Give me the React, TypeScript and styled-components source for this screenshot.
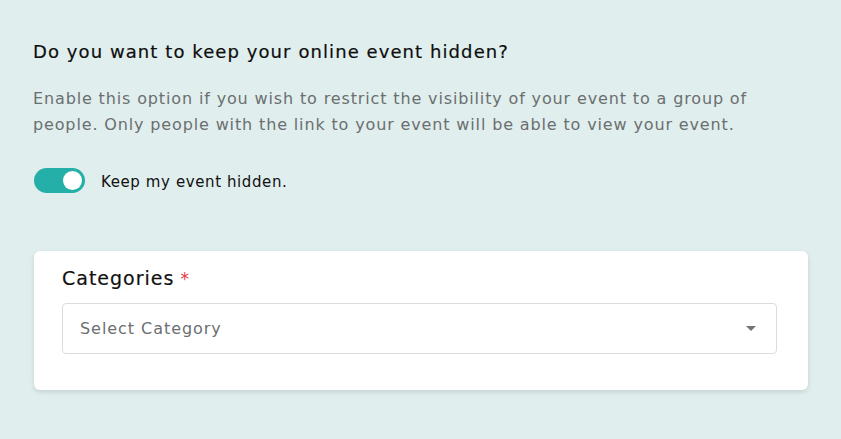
import React, { useState } from "react";
import styled, { createGlobalStyle } from "styled-components";

const Global = createGlobalStyle`
  html, body { margin: 0; padding: 0; background: #e0eeed; }
  body { font-family: "DejaVu Sans", "Noto Sans", sans-serif; }
  * { box-sizing: border-box; }
`;

const Page = styled.div`
  width: 841px;
  height: 439px;
  background: #e0eeed;
  padding: 38px 33px 0 33px;
  display: flex;
  flex-direction: column;
`;

const Heading = styled.h2`
  margin: 0;
  font-size: 18px;
  font-weight: 400;
  letter-spacing: 1.08px;
  line-height: 28px;
  color: #0e0e0e;
  -webkit-text-stroke: 0.2px #0e0e0e;
`;

const Description = styled.p`
  margin: 20px 0 0 0;
  font-size: 16px;
  letter-spacing: 0.86px;
  line-height: 26px;
  color: #6b6f70;
  max-width: 745px;
`;

const ToggleRow = styled.label`
  display: flex;
  align-items: center;
  gap: 16px;
  margin-top: 30px;
  padding-left: 1px;
  cursor: pointer;
`;

const Track = styled.span<{ $on: boolean }>`
  position: relative;
  width: 51px;
  height: 25px;
  border-radius: 13px;
  background: ${(p) => (p.$on ? "#24b0a8" : "#c8cfcf")};
  flex-shrink: 0;
`;

const Knob = styled.span<{ $on: boolean }>`
  position: absolute;
  top: 3px;
  left: ${(p) => (p.$on ? "29px" : "3px")};
  width: 19px;
  height: 19px;
  border-radius: 50%;
  background: #fff;
`;

const ToggleLabel = styled.span`
  font-size: 15px;
  letter-spacing: 0.6px;
  color: #111;
  padding-top: 2px;
`;

const Card = styled.div`
  margin-top: 58px;
  margin-left: 1px;
  width: 774px;
  background: #fff;
  border-radius: 6px;
  box-shadow: 0 2px 5px rgba(0, 0, 0, 0.12);
  padding: 13px 31px 36px 28px;
  display: flex;
  flex-direction: column;
`;

const FieldLabel = styled.div`
  font-size: 19px;
  font-weight: 400;
  letter-spacing: 1px;
  line-height: 28px;
  color: #111;
  -webkit-text-stroke: 0.2px #111;
`;

const Required = styled.span`
  color: #e53945;
  margin-left: 6px;
  font-size: 17px;
  -webkit-text-stroke: 0;
`;

const SelectBox = styled.div`
  margin-top: 10px;
  height: 51px;
  border: 1px solid #dcdcdf;
  border-radius: 4px;
  display: flex;
  align-items: center;
  justify-content: space-between;
  padding: 0 20px 0 17px;
`;

const Placeholder = styled.span`
  font-size: 16px;
  letter-spacing: 0.95px;
  color: #6c6f72;
`;

const Caret = styled.span`
  width: 0;
  height: 0;
  border-left: 5px solid transparent;
  border-right: 5px solid transparent;
  border-top: 5px solid #757575;
`;

export default function App() {
  const [on, setOn] = useState(true);
  return (
    <Page>
      <Global />
      <Heading>Do you want to keep your online event hidden?</Heading>
      <Description>
        Enable this option if you wish to restrict the visibility of your event to a group of people. Only people with the link to your event will be able to view your event.
      </Description>
      <ToggleRow onClick={() => setOn(!on)}>
        <Track $on={on}>
          <Knob $on={on} />
        </Track>
        <ToggleLabel>Keep my event hidden.</ToggleLabel>
      </ToggleRow>
      <Card>
        <FieldLabel>
          Categories<Required>*</Required>
        </FieldLabel>
        <SelectBox>
          <Placeholder>Select Category</Placeholder>
          <Caret />
        </SelectBox>
      </Card>
    </Page>
  );
}
